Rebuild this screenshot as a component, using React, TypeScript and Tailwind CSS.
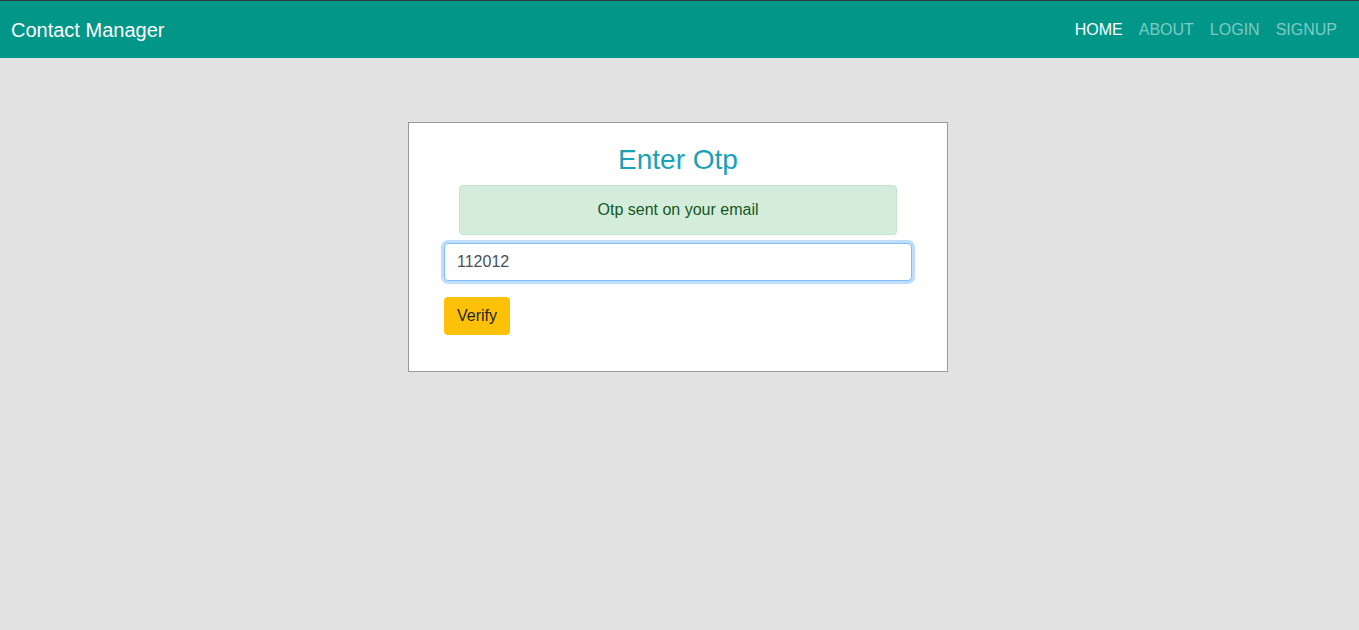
import React from "react";

export default function App() {
  return (
    <div className="min-h-[630px] bg-[#e2e2e2] font-['Liberation_Sans',Arial,sans-serif] text-[#212529]">
      <nav className="flex h-[58px] items-center justify-between border-t border-[#2f3b3a] bg-[#009688] pl-[11px] pr-[14px]">
        <a className="text-[20px] leading-[30px] text-white">Contact Manager</a>
        <ul className="flex items-center">
          <li><a className="block px-2 text-[16px] leading-6 text-white">HOME</a></li>
          <li><a className="block px-2 text-[16px] leading-6 text-white/50">ABOUT</a></li>
          <li><a className="block px-2 text-[16px] leading-6 text-white/50">LOGIN</a></li>
          <li><a className="block px-2 text-[16px] leading-6 text-white/50">SIGNUP</a></li>
        </ul>
      </nav>
      <div className="flex justify-center pt-[64px] pr-[3px]">
        <div className="w-[540px] border border-[#999999] bg-white px-[35px] pt-[20px] pb-[36px]">
          <h3 className="mb-2 text-center text-[28px] leading-[1.2] text-[#17a2b8]">Enter Otp</h3>
          <div className="mx-[15px] mb-2 rounded border border-[#c3e6cb] bg-[#d4edda] px-5 py-3 text-center text-[16px] leading-6 text-[#155724]">
            Otp sent on your email
          </div>
          <input
            defaultValue="112012"
            className="block h-[38px] w-full rounded border border-[#80bdff] bg-white px-3 text-[16px] text-[#495057] shadow-[0_0_0_3px_rgba(0,123,255,0.25)] outline-none"
          />
          <button className="mt-4 h-[38px] w-[66px] rounded bg-[#ffc107] text-[16px] leading-6 text-[#212529]">
            Verify
          </button>
        </div>
      </div>
    </div>
  );
}
